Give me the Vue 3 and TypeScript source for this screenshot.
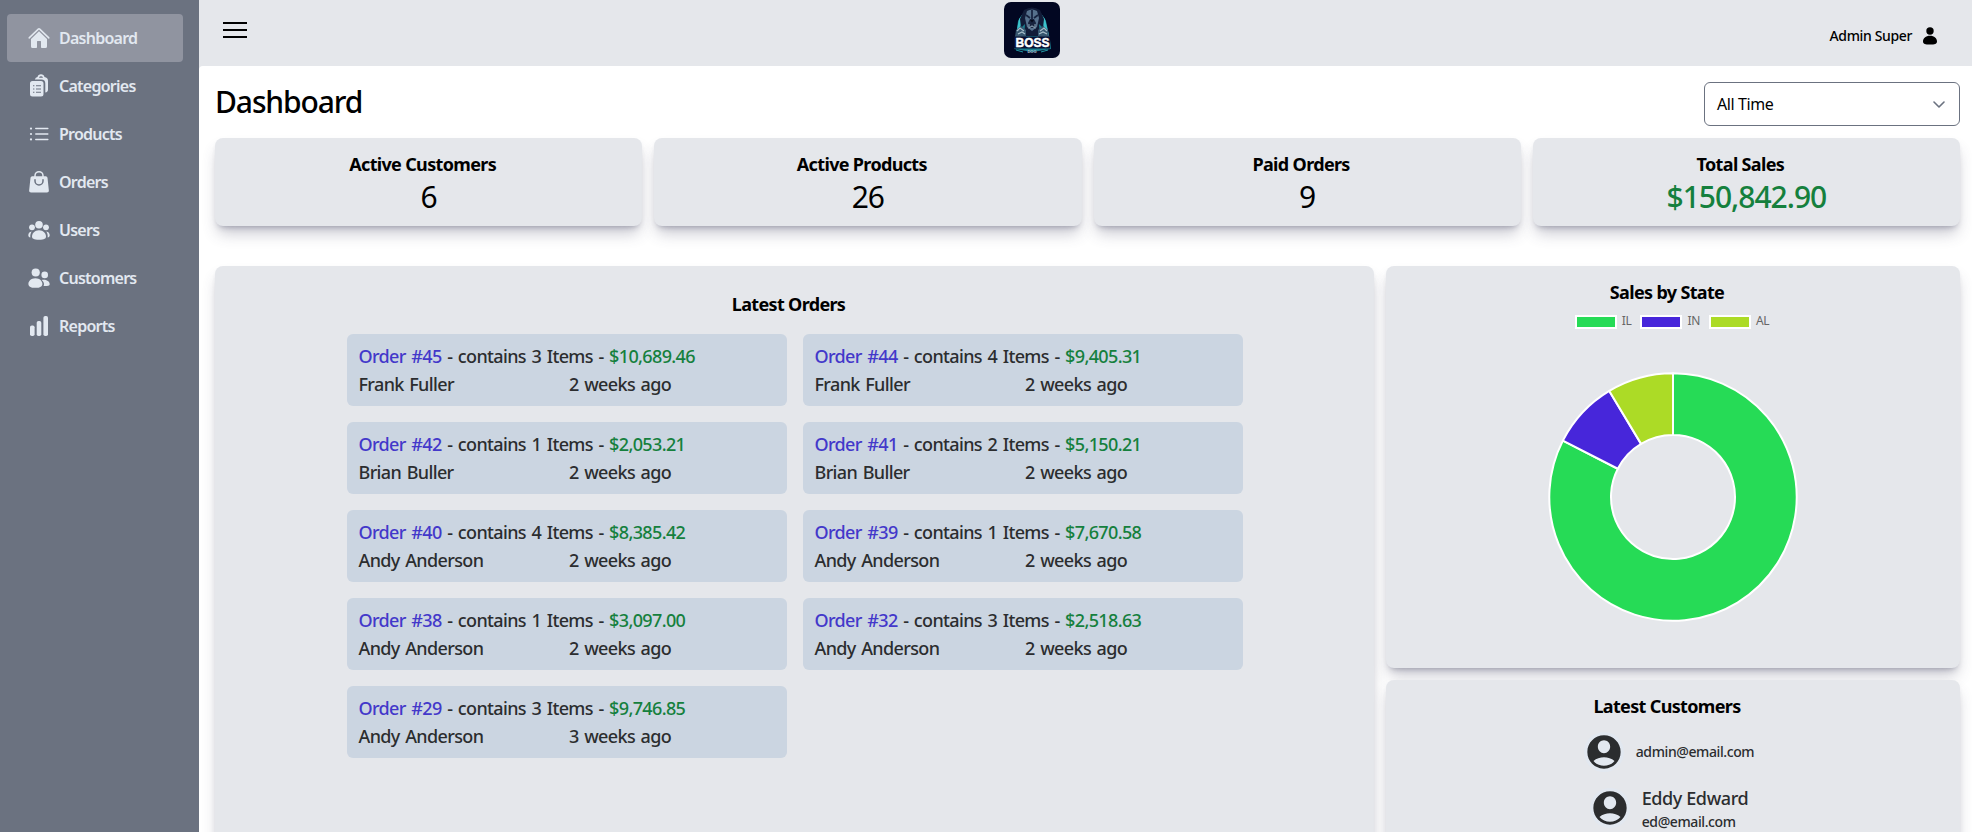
<script setup lang="ts">
type NavItem = { label: string; icon: string; active?: boolean }
type Order = { id: number; items: number; total: string; customer: string; age: string }
type Slice = { label: string; color: string; from: number; to: number }

const nav: NavItem[] = [
  { label: 'Dashboard', icon: 'home', active: true },
  { label: 'Categories', icon: 'clipboard' },
  { label: 'Products', icon: 'list' },
  { label: 'Orders', icon: 'bag' },
  { label: 'Users', icon: 'group' },
  { label: 'Customers', icon: 'pair' },
  { label: 'Reports', icon: 'bars' },
]

const stats = [
  { label: 'Active Customers', value: '6' },
  { label: 'Active Products', value: '26' },
  { label: 'Paid Orders', value: '9' },
  { label: 'Total Sales', value: '$150,842.90', money: true },
]

const orders: Order[] = [
  { id: 45, items: 3, total: '$10,689.46', customer: 'Frank Fuller', age: '2 weeks ago' },
  { id: 44, items: 4, total: '$9,405.31', customer: 'Frank Fuller', age: '2 weeks ago' },
  { id: 42, items: 1, total: '$2,053.21', customer: 'Brian Buller', age: '2 weeks ago' },
  { id: 41, items: 2, total: '$5,150.21', customer: 'Brian Buller', age: '2 weeks ago' },
  { id: 40, items: 4, total: '$8,385.42', customer: 'Andy Anderson', age: '2 weeks ago' },
  { id: 39, items: 1, total: '$7,670.58', customer: 'Andy Anderson', age: '2 weeks ago' },
  { id: 38, items: 1, total: '$3,097.00', customer: 'Andy Anderson', age: '2 weeks ago' },
  { id: 32, items: 3, total: '$2,518.63', customer: 'Andy Anderson', age: '2 weeks ago' },
  { id: 29, items: 3, total: '$9,746.85', customer: 'Andy Anderson', age: '3 weeks ago' },
]

const slices: Slice[] = [
  { label: 'IL', color: '#26db56', from: 0, to: 297.1 },
  { label: 'IN', color: '#4726da', from: 297.1, to: 329 },
  { label: 'AL', color: '#acdb26', from: 329, to: 360 },
]

const customers = [
  { name: '', email: 'admin@email.com' },
  { name: 'Eddy Edward', email: 'ed@email.com' },
]

function point(radius: number, degrees: number): string {
  const a = (degrees * Math.PI) / 180
  return `${(125 + radius * Math.sin(a)).toFixed(2)} ${(125 - radius * Math.cos(a)).toFixed(2)}`
}

function ring(s: Slice): string {
  const large = s.to - s.from > 180 ? 1 : 0
  return `M${point(123.7, s.from)}A123.7 123.7 0 ${large} 1 ${point(123.7, s.to)}L${point(62, s.to)}A62 62 0 ${large} 0 ${point(62, s.from)}Z`
}
</script>

<template>
  <div class="app">
    <aside class="sidebar">
      <nav class="nav">
        <a v-for="item in nav" :key="item.label" class="nav-item" :class="{ active: item.active }">
          <svg class="nav-icon" viewBox="0 0 24 24" fill="currentColor">
            <g v-if="item.icon === 'home'">
              <path d="M2.2 11.9 11.3 3.1a1 1 0 0 1 1.4 0l9.1 8.8" fill="none" stroke="currentColor" stroke-width="1.5" stroke-linecap="round" stroke-linejoin="round" />
              <path d="M12 5.2 4 12.9V20.4a1.6 1.6 0 0 0 1.6 1.6H9.2a.8.8 0 0 0 .8-.8V15.6a.5.5 0 0 1 .5-.5h3a.5.5 0 0 1 .5.5v5.6a.8.8 0 0 0 .8.8h3.6a1.6 1.6 0 0 0 1.6-1.6V12.9Z" />
            </g>
            <g v-else-if="item.icon === 'clipboard'">
              <path d="M7.8 5.5A4 4 0 0 1 10.5 3.1 3.6 3.6 0 0 1 17.5 3.1 4 4 0 0 1 21 7v8.5a3 3 0 0 1-2.7 3V9.500a4 4 0 0 0-4-4ZM12 3.700h4a2.100 2.100 0 0 0-4 0Z" fill-rule="evenodd" />
              <path d="M5.500 7h8.500a2.500 2.500 0 0 1 2.500 2.500v10.500a2.500 2.500 0 0 1-2.500 2.500H5.500A2.500 2.500 0 0 1 3 20V9.500A2.500 2.500 0 0 1 5.500 7Z" />
              <path d="M6 11.800h1.400M9 11.800h5M6 15h1.400M9 15h5M6 18.200h1.400M9 18.200h5" stroke="#6b7280" stroke-width="1.100" />
            </g>
            <g v-else-if="item.icon === 'list'">
              <path d="M8.800 6.600h12M8.800 12h12M8.800 17.400h12" stroke="currentColor" stroke-width="1.500" stroke-linecap="round" />
              <circle cx="4" cy="6.600" r="1.100" /><circle cx="4" cy="12" r="1.100" /><circle cx="4" cy="17.400" r="1.100" />
            </g>
            <g v-else-if="item.icon === 'bag'">
              <path d="M8 8V5.700a4 4 0 0 1 8 0V8" fill="none" stroke="currentColor" stroke-width="1.500" />
              <path d="M5.200 6.300h13.600a1.700 1.700 0 0 1 1.700 1.500l1.300 12.300a2 2 0 0 1-2 2.400H4.200a2 2 0 0 1-2-2.400L3.500 7.800a1.700 1.700 0 0 1 1.700-1.500Z" />
              <path d="M8 9.700v1.200a4 4 0 0 0 8 0V9.700" fill="none" stroke="#6b7280" stroke-width="1.500" stroke-linecap="round" />
            </g>
            <g v-else-if="item.icon === 'group'">
              <circle cx="12" cy="6.800" r="3.800" /><circle cx="5" cy="9.300" r="2.900" /><circle cx="19" cy="9.300" r="2.900" />
              <path d="M12 12.300c4.400 0 7 3.300 7 6.300 0 2-1.500 3.200-7 3.200s-7-1.200-7-3.200c0-3 2.600-6.300 7-6.300Z" />
              <path d="M4.700 13.500c-2.400.2-3.400 2.200-3.400 3.700 0 1.300.7 2 2 2.300-.2-2.600.3-4.300 1.400-6ZM19.300 13.500c2.400.2 3.400 2.200 3.400 3.700 0 1.300-.7 2-2 2.300.2-2.600-.3-4.300-1.400-6Z" />
            </g>
            <g v-else-if="item.icon === 'pair'">
              <circle cx="8.700" cy="6.500" r="4.100" /><circle cx="17.700" cy="8.900" r="3.300" />
              <path d="M8.400 12.300c4.500 0 7 3 7 5.600 0 2.400-2 3.900-7 3.900s-7-1.500-7-3.900c0-2.600 2.500-5.600 7-5.600Z" />
              <path d="M14.700 14c3.700-.9 8 1 8 4.200 0 1.700-2.600 2-6.100 1.900.9-2 .4-4.300-1.900-6.100Z" />
            </g>
            <g v-else>
              <rect x="3" y="11.500" width="4.600" height="10.500" rx="1.800" /><rect x="9.700" y="7" width="4.600" height="15" rx="1.800" /><rect x="16.400" y="2" width="4.600" height="20" rx="1.800" />
            </g>
          </svg>
          <span>{{ item.label }}</span>
        </a>
      </nav>
    </aside>

    <div class="content">
      <header class="topbar">
        <svg class="menu" viewBox="0 0 24 16"><path d="M0 1h24M0 8h24M0 15h24" stroke="#000" stroke-width="2" /></svg>
        <svg class="logo" viewBox="0 0 56 56">
          <rect width="56" height="56" rx="7" fill="#020722" />
          <path d="M14 19 20 10 28 6 36 10 42 19 46 38 47 47 28 50 10 47 12 34Z" fill="#1b7f8f" />
          <path d="M15 17 18 13 17 23 13 32 11 38ZM41 17 38 13 39 23 44 32 46 38Z" fill="#3cc3cc" />
          <path d="M20 8q8-5 16 0l4 9-1 9-4-4 1 12H20l1-12-4 4-1-9Z" fill="#121c38" />
          <path d="M23 9q5-3 10 0l2 7-2 9-5 4-5-4-2-9Z" fill="#56718d" />
          <path d="M28 8v10M22 13l4 3M34 13l-4 3" stroke="#16223f" stroke-width="1.700" />
          <path d="m24 21 2-4h4l2 4-1 5h-6Z" fill="#17233e" />
          <path d="M26 18h4l-2 2.500Z" fill="#030818" />
          <path d="M25 22v4l3-2 3 2v-4" fill="none" stroke="#8097aa" stroke-width="1.100" />
          <path d="m12 28 5-4 5 4v7H11ZM34 28l5-4 5 4 1 7H34Z" fill="#37566f" />
          <path d="m13 29 3-3 4 3M14 32l4-2 3 2M36 29l4-3 3 3M35 32l4-2 4 2" fill="none" stroke="#a6bdc9" stroke-width="1.300" />
          <path d="M10 34.500h36v12H10Z" fill="#071033" />
          <text x="28.500" y="45" class="logo-name" text-anchor="middle" textLength="34" lengthAdjust="spacingAndGlyphs">BOSS</text>
          <text x="28" y="50.500" class="logo-sub" text-anchor="middle" textLength="9">DOG</text>
          <path d="M12 48l7 2M44 48l-7 2" stroke="#2299a6" stroke-width="1" />
        </svg>
        <div class="account">
          <span>Admin Super</span>
          <svg viewBox="0 0 14 18"><circle cx="7" cy="4" r="3.700" /><path d="M7 8.700c4.300 0 7 2.700 7 5.700 0 2.200-2.200 3.200-7 3.200s-7-1-7-3.200c0-3 2.700-5.700 7-5.700Z" /></svg>
        </div>
      </header>

      <main class="main">
        <div class="heading">
          <h1>Dashboard</h1>
          <div class="select">
            <span>All Time</span>
            <svg viewBox="0 0 12 7"><path d="m1 1 5 5 5-5" fill="none" stroke="#6b7280" stroke-width="1.600" stroke-linecap="round" stroke-linejoin="round" /></svg>
          </div>
        </div>

        <section class="stats">
          <div v-for="s in stats" :key="s.label" class="card stat">
            <h2>{{ s.label }}</h2>
            <p :class="{ money: s.money }">{{ s.value }}</p>
          </div>
        </section>

        <section class="panels">
          <div class="card orders">
            <h2>Latest Orders</h2>
            <div class="order-grid">
              <div v-for="o in orders" :key="o.id" class="order">
                <div class="summary"><a>Order #{{ o.id }}</a> - contains {{ o.items }} Items - <b>{{ o.total }}</b></div>
                <div class="meta"><span>{{ o.customer }}</span><span>{{ o.age }}</span></div>
              </div>
            </div>
          </div>

          <div class="side">
            <div class="card sales">
              <h2>Sales by State</h2>
              <div class="legend">
                <div v-for="s in slices" :key="s.label" class="key">
                  <i :style="{ backgroundColor: s.color }"></i><span>{{ s.label }}</span>
                </div>
              </div>
              <svg class="donut" viewBox="0 0 250 250">
                <path v-for="s in slices" :key="s.label" :d="ring(s)" :fill="s.color" stroke="#fff" stroke-width="2" stroke-linejoin="round" />
              </svg>
            </div>
            <div class="card customers">
              <h2>Latest Customers</h2>
              <div v-for="c in customers" :key="c.email" class="customer">
                <svg class="avatar" viewBox="0 0 24 24"><path d="M12 2C6.480 2 2 6.480 2 12s4.480 10 10 10 10-4.480 10-10S17.520 2 12 2zm0 3c2 0 3.700 1.700 3.700 3.800s-1.700 3.900-3.700 3.900-3.700-1.800-3.700-3.900S10 5 12 5zm0 15.300c-2.400 0-4.800-1-6.300-2.900 1.700-1.600 4-2.300 6.300-2.300s4.600.7 6.300 2.300c-1.500 1.900-3.900 2.900-6.300 2.900z" /></svg>
                <div><div v-if="c.name" class="name">{{ c.name }}</div><div class="email">{{ c.email }}</div></div>
              </div>
            </div>
          </div>
        </section>
      </main>
    </div>
  </div>
</template>

<style>
body { margin: 0; overflow: hidden; }
</style>

<style scoped>
* { box-sizing: border-box; }
.app { display: flex; width: 100%; height: 832px; overflow: hidden; background: #e5e7eb; color: #000; font-family: "Noto Sans", "Open Sans", sans-serif; font-size: 16px; }
h1, h2, p { margin: 0; font-weight: 500; }
svg { display: block; flex: none; }

.sidebar { flex: none; width: 199px; background: #6b7280; padding: 14px 16px 0 7px; }
.nav { display: flex; flex-direction: column; }
.nav-item { display: flex; align-items: center; gap: 8px; height: 48px; padding-left: 20px; border-radius: 4px; color: #e2e8f0; font-weight: 650; letter-spacing: -0.75px; }
.nav-item.active { background: #9094a0; }
.nav-icon { width: 24px; height: 24px; }

.content { flex: 1; min-width: 0; }
.topbar { display: flex; justify-content: space-between; height: 66px; padding: 0 35px 0 24px; }
.menu { width: 24px; height: 16px; margin-top: 22px; }
.logo { width: 56px; height: 56px; margin: 2px 0 0 -12px; }
.logo-name { font: 700 13.5px "Liberation Sans", sans-serif; fill: #fff; stroke: #fff; stroke-width: 0.5px; }
.logo-sub { font: 700 4px "Liberation Sans", sans-serif; fill: #b7c5d2; }
.account { display: flex; gap: 11px; padding-top: 26px; font-size: 14px; font-weight: 540; line-height: 20px; letter-spacing: -0.36px; }
.account svg { width: 14px; height: 18px; margin-top: 1px; }

.main { height: 766px; padding: 16px 12px 0 16px; background: #fff; border-top-left-radius: 4px; }
.heading { display: flex; justify-content: space-between; height: 56px; }
h1 { margin-top: 2px; font-size: 30px; line-height: 36px; letter-spacing: -1.1px; }
.select { display: flex; align-items: center; justify-content: space-between; width: 256px; height: 44px; padding: 0 14px 0 12px; border: 1px solid #6b7280; border-radius: 6px; letter-spacing: -0.42px; }
.select svg { width: 12px; height: 7px; }

.card { background: #e5e7eb; border-radius: 8px; box-shadow: 0 10px 15px -3px rgba(65, 67, 95, 0.3), 0 4px 6px -4px rgba(55, 57, 85, 0.45); }
h2 { margin-right: 12px; text-align: center; font-size: 18px; line-height: 28px; font-weight: 660; letter-spacing: -0.66px; }
.stats { display: grid; grid-template-columns: repeat(4, 1fr); gap: 12px; }
.stat { height: 88px; padding: 12px 0; }
.stat p { margin-top: 1px; text-align: center; font-size: 30px; line-height: 36px; font-weight: 400; letter-spacing: -1px; }
.stat .money { font-weight: 530; color: #15803d; }

.panels { display: flex; gap: 12px; margin-top: 40px; }
.orders { width: 1159px; height: 640px; padding-top: 24px; }
.order-grid { display: grid; grid-template-columns: 440px 440px; justify-content: center; gap: 16px; margin-top: 16px; }
.order { height: 72px; padding: 8px 12px; border-radius: 6px; background: #cbd5e1; color: #2b2d2f; font-size: 18px; line-height: 28px; font-weight: 530; letter-spacing: -0.64px; word-spacing: 1.5px; white-space: nowrap; }
.summary a { color: #4338ca; }
.summary b { color: #15803d; font-weight: 530; }
.meta { display: grid; grid-template-columns: 1fr 1fr; column-gap: 5px; }

.side { flex: 1; display: flex; flex-direction: column; gap: 12px; }
.sales { height: 402px; padding-top: 12px; }
.legend { display: flex; justify-content: center; gap: 9px; height: 14px; margin-top: 9px; padding-right: 2px; }
.key { display: flex; gap: 5px; color: #666; font-size: 12px; line-height: 12px; letter-spacing: -0.3px; }
.key i { width: 42px; height: 14px; border: 2px solid #fff; }
.donut { width: 250px; height: 250px; margin: 43px auto 0; }
.customers { display: flex; flex-direction: column; gap: 12px; height: 230px; padding-top: 12px; }
.customer { display: flex; justify-content: center; align-items: center; gap: 12px; padding-right: 8px; color: #2b2d2f; font-weight: 530; }
.avatar { width: 40px; height: 40px; border-radius: 50%; background: #e2e8f0; fill: #2b2d2f; }
.name { font-size: 18px; line-height: 28px; letter-spacing: -0.4px; }
.email { font-size: 14px; line-height: 20px; letter-spacing: -0.4px; }
</style>
